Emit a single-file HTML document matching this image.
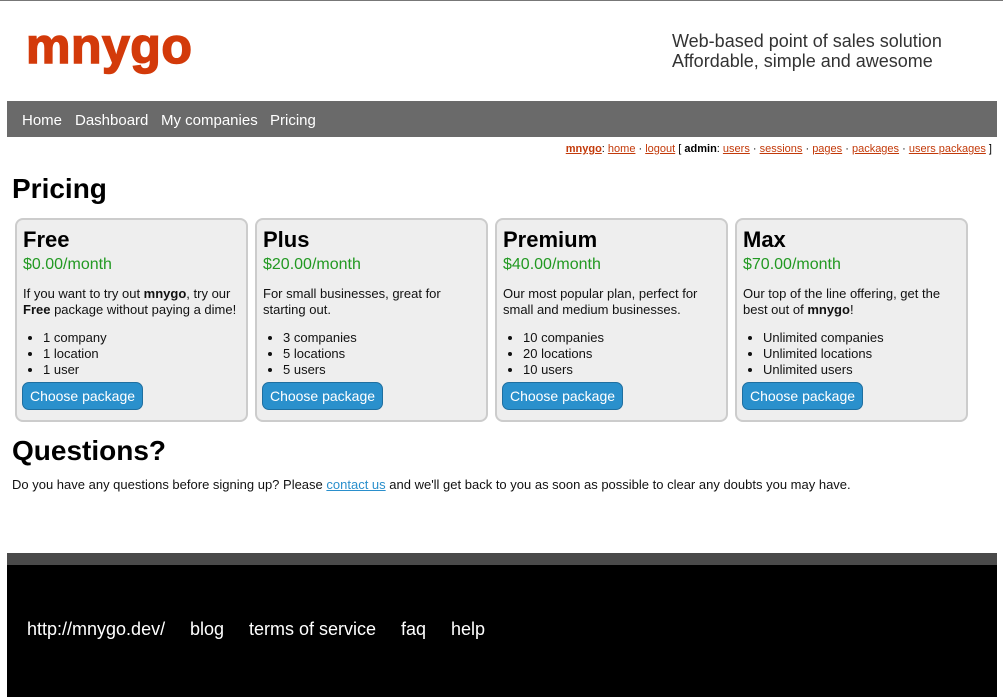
<!DOCTYPE html>
<html><head><meta charset="utf-8"><style>
body{margin:0;width:1003px;height:697px;position:relative;background:#fff;font-family:"Liberation Sans",Arial,sans-serif;overflow:hidden}
.a{position:absolute}
#top{left:0;top:0;width:1003px;height:1px;background:#777}
#logo{left:26px;top:21px;font-size:50px;line-height:50px;font-weight:bold;color:#d33a0a;letter-spacing:0.5px;-webkit-text-stroke:1.5px #d33a0a}
#tag{left:672px;top:31px;font-size:18px;line-height:20px;color:#333}
#nav{left:7px;top:101px;width:990px;height:36px;background:#6a6a6a}
#nav span{position:absolute;top:11px;color:#fff;font-size:15px}
#admin{right:11px;top:143px;font-size:11px;color:#000}
#admin a{color:#c33a0a}
h1{position:absolute;margin:0;font-size:28px;font-weight:bold}
.card{position:absolute;top:218px;width:229px;height:200px;border:2px solid #ccc;border-radius:8px;background:#eee;box-sizing:content-box}
.card h2{position:absolute;left:6px;top:7px;margin:0;font-size:22px}
.card .p{position:absolute;left:6px;top:36px;font-size:16px;color:#229922}
.card .d{position:absolute;left:6px;top:66px;width:222px;font-size:13px;line-height:16px;color:#111}
.card ul{position:absolute;left:0;top:110px;margin:0;padding-left:26px;font-size:13px;line-height:16px;color:#111}
.card .b{position:absolute;left:5px;top:162px;width:119px;height:26px;background:#2a90cc;border:1px solid #1f6fa0;border-radius:7px;color:#fff;font-size:14px;line-height:26px;text-align:center;white-space:nowrap}
#q{left:12px;top:477px;font-size:13px;color:#111}
#q a{color:#2a8fcc}
#fb{left:7px;top:553px;width:990px;height:12px;background:#4a4a4a}
#f{left:7px;top:565px;width:990px;height:132px;background:#000}
#f span{position:absolute;top:54px;color:#fff;font-size:18px}
</style></head><body>
<div class="a" id="top"></div>
<div class="a" id="logo">mnygo</div>
<div class="a" id="tag">Web-based point of sales solution<br>Affordable, simple and awesome</div>
<div class="a" id="nav"><span style="left:15px">Home</span><span style="left:68px">Dashboard</span><span style="left:154px">My companies</span><span style="left:263px">Pricing</span></div>
<div class="a" id="admin"><a href="#"><b>mnygo</b></a>: <a href="#">home</a> · <a href="#">logout</a> [ <b>admin</b>: <a href="#">users</a> · <a href="#">sessions</a> · <a href="#">pages</a> · <a href="#">packages</a> · <a href="#">users packages</a> ]</div>
<h1 style="left:12px;top:173px">Pricing</h1>
<div class="card" style="left:15px"><h2>Free</h2><div class="p">$0.00/month</div><div class="d">If you want to try out <b>mnygo</b>, try our <b>Free</b> package without paying a dime!</div><ul><li>1 company</li><li>1 location</li><li>1 user</li></ul><div class="b">Choose package</div></div>
<div class="card" style="left:255px"><h2>Plus</h2><div class="p">$20.00/month</div><div class="d">For small businesses, great for starting out.</div><ul><li>3 companies</li><li>5 locations</li><li>5 users</li></ul><div class="b">Choose package</div></div>
<div class="card" style="left:495px"><h2>Premium</h2><div class="p">$40.00/month</div><div class="d">Our most popular plan, perfect for small and medium businesses.</div><ul><li>10 companies</li><li>20 locations</li><li>10 users</li></ul><div class="b">Choose package</div></div>
<div class="card" style="left:735px"><h2>Max</h2><div class="p">$70.00/month</div><div class="d">Our top of the line offering, get the best out of <b>mnygo</b>!</div><ul><li>Unlimited companies</li><li>Unlimited locations</li><li>Unlimited users</li></ul><div class="b">Choose package</div></div>
<h1 style="left:12px;top:435px">Questions?</h1>
<div class="a" id="q">Do you have any questions before signing up? Please <a href="#">contact us</a> and we'll get back to you as soon as possible to clear any doubts you may have.</div>
<div class="a" id="fb"></div>
<div class="a" id="f"><span style="left:20px">http://mnygo.dev/</span><span style="left:183px">blog</span><span style="left:242px">terms of service</span><span style="left:394px">faq</span><span style="left:444px">help</span></div>
</body></html>
